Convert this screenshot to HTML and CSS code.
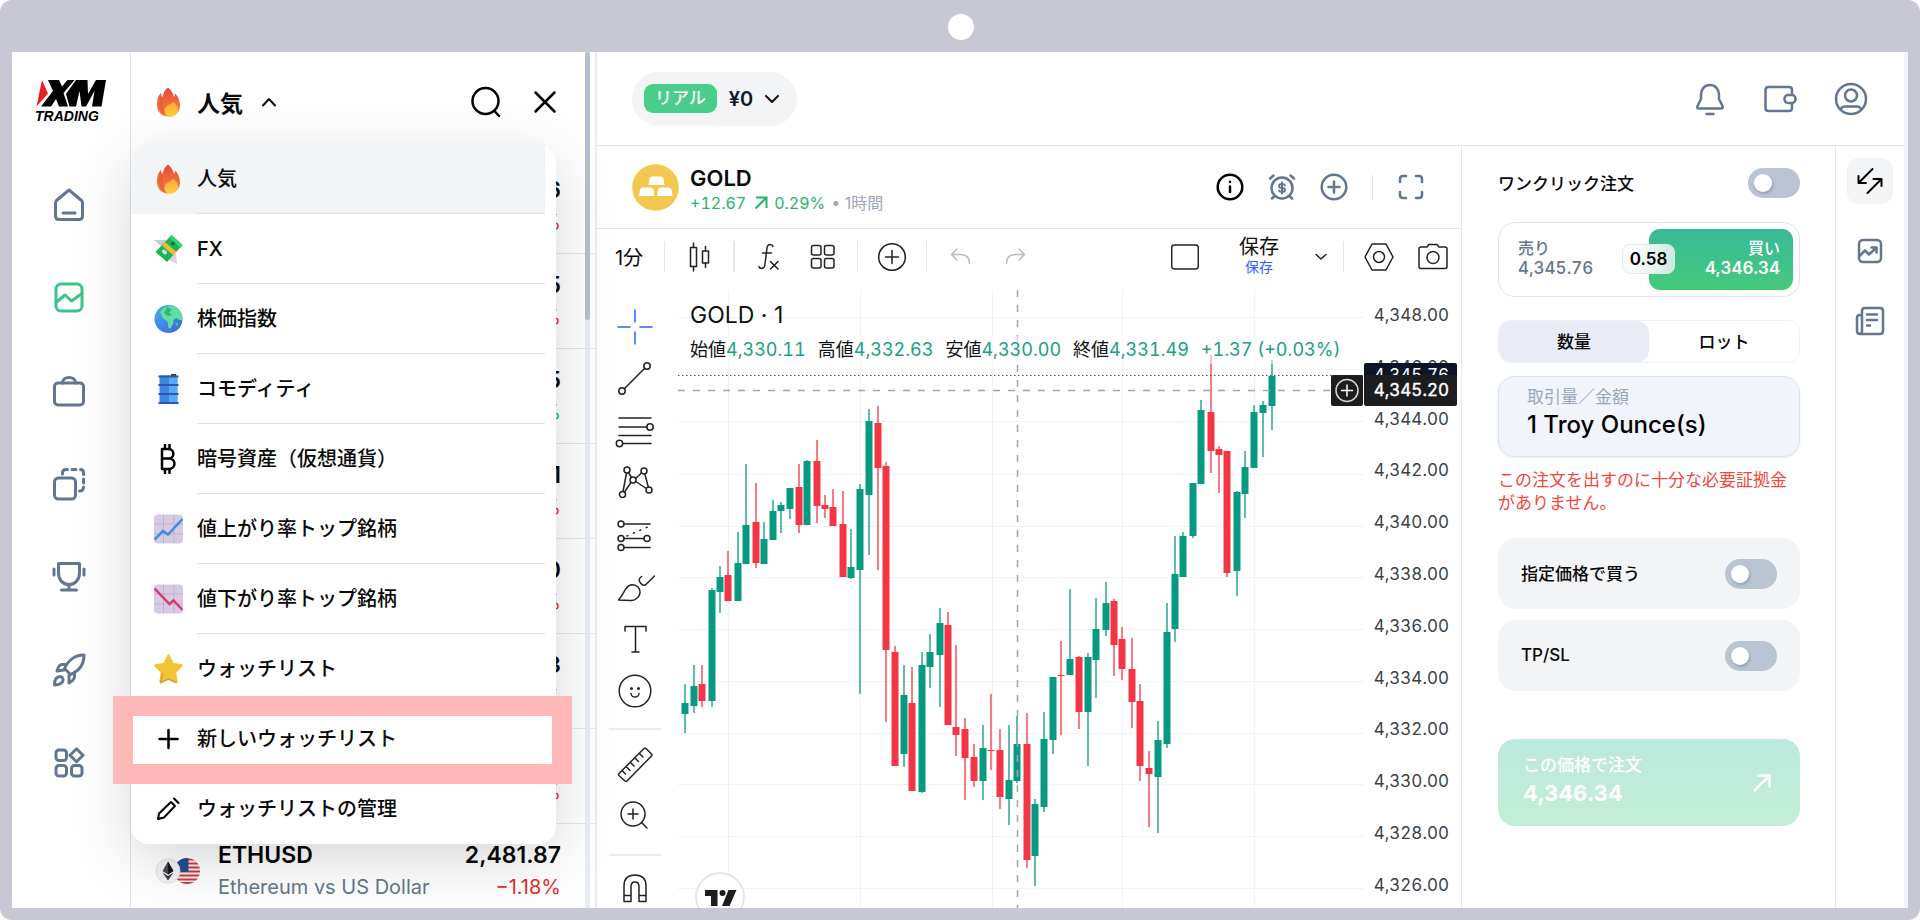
FILE: index.html
```html
<!DOCTYPE html>
<html lang="ja">
<head>
  <meta charset="UTF-8">
  <title>XM Trading</title>
  <link rel="stylesheet" href="styles.css">
</head>
<body>
<div class="device">
  <span class="camera"></span>

  <div class="app">
    <!-- Left navigation -->
    <nav class="side-nav">
      <a class="logo" href="#" aria-label="XM Trading">
        <svg width="72" height="27" viewBox="0 0 72 27">
          <path d="M7 0 L13 13.500 L1.500 26.500 Z" fill="#ee1c25"/>
          <path d="M13 0 H24 L27 6.500 L32.500 0 H39.500 L28.500 13 L33 26.500 H24 L21 19 L16 26.500 H6 L18 11 Z" fill="#000"/>
          <path d="M41 0 H52.500 L53 14 L61 0 H71 L66.500 26.500 H57 L59.500 11 L51 26.500 H46.500 L44.500 11 L41 26.500 H34.500 L31 14 Z" fill="#000"/>
        </svg>
        <span>TRADING</span>
      </a>
      <a class="nav-item" href="#" aria-label="Home">
        <svg class="icon" width="32" height="34" viewBox="0 0 32 34"><path d="M16 2 L28.500 12.500 Q29.500 13.500 29.500 15 V28 Q29.500 31.500 26 31.500 H6 Q2.500 31.500 2.500 28 V15 Q2.500 13.500 3.500 12.500 Z"/><path d="M10 25 H22"/></svg>
      </a>
      <a class="nav-item active" href="#" aria-label="Markets">
        <svg class="icon" width="32" height="32" viewBox="0 0 32 32"><rect x="3" y="2" width="26" height="27" rx="5"/><path d="M3 20.500 L12 13 L18.500 19 L29 11.500"/></svg>
      </a>
      <a class="nav-item" href="#" aria-label="Portfolio">
        <svg class="icon" width="34" height="34" viewBox="0 0 34 34"><rect x="2.500" y="9" width="29" height="22" rx="3.500"/><path d="M10.500 9 C10.500 1.500 23.500 1.500 23.500 9"/></svg>
      </a>
      <a class="nav-item" href="#" aria-label="Copy trading">
        <svg class="icon" width="34" height="34" viewBox="0 0 34 34"><rect x="2.500" y="11" width="21" height="21" rx="4"/><path d="M10.500 7 V6 Q10.500 2.500 14 2.500 H15.500 M20 2.500 H24 M28.500 2.500 Q31.500 2.500 31.500 6 V7.500 M31.500 12 V16 M31.500 20 Q31.500 24 27.500 24"/></svg>
      </a>
      <a class="nav-item" href="#" aria-label="Competitions">
        <svg class="icon" width="34" height="34" viewBox="0 0 34 34"><path d="M6.500 3.500 H27.500 V13 C27.500 20 23 24.500 17 24.500 C11 24.500 6.500 20 6.500 13 Z M17 24.500 V30 M9.500 30 H24.500 M2 9 V15 M32 9 V15"/></svg>
      </a>
      <a class="nav-item" href="#" aria-label="Discover">
        <svg class="icon" width="34" height="34" viewBox="0 0 34 34"><path d="M32 2 C22 2 15.500 8.500 12.500 15.500 L18.500 21.500 C26 18.500 32 12 32 2 Z"/><path d="M14.500 11.500 H9.500 Q7.500 12 6.500 14 L5 18 L12 17 M22.500 19 V23.500 Q22.500 26 20.500 27.500 L17 30 L17 22.500"/><path d="M8.500 23.500 C4 23.500 2.500 27 2.500 32 C7.500 32 11.500 30 11 26 Q10.500 24 8.500 23.500 Z"/></svg>
      </a>
      <a class="nav-item" href="#" aria-label="More">
        <svg class="icon" width="32" height="32" viewBox="0 0 32 32"><rect x="3" y="3" width="10.500" height="10.500" rx="3"/><rect x="3" y="18.500" width="10.500" height="10.500" rx="3"/><rect x="18.500" y="18.500" width="10.500" height="10.500" rx="3"/><path d="M23.500 1.800 L30 8.300 L23.500 14.800 L17 8.300 Z"/></svg>
      </a>
    </nav>

    <!-- Watchlist -->
    <aside class="watch">
      <div class="watch-head">
        <button class="watch-title">
          <svg width="29" height="30" viewBox="0 0 29 30"><use href="#fire"/></svg>
          <span>人気</span>
          <svg class="caret" width="14" height="10" viewBox="0 0 14 10"><path d="M1 8.500 L7 2 L13 8.500"/></svg>
        </button>
        <button class="plain" aria-label="Search"><svg class="icon-dark" width="30" height="32" viewBox="0 0 30 32"><circle cx="14.500" cy="15" r="13"/><path d="M23.500 25 L28 30"/></svg></button>
        <button class="plain" aria-label="Close"><svg class="icon-dark" width="24" height="24" viewBox="0 0 24 24"><path d="M2.500 2.500 L21.500 21.500 M21.500 2.500 L2.500 21.500"/></svg></button>
      </div>

      <div class="quotes">
        <div class="quote"><div class="quote-num"><b>6</b><span class="down">%</span></div></div>
        <div class="quote"><div class="quote-num"><b>5</b><span class="down">%</span></div></div>
        <div class="quote"><div class="quote-num"><b>5</b><span class="up">%</span></div></div>
        <div class="quote"><div class="quote-num"><b>1</b><span class="down">%</span></div></div>
        <div class="quote"><div class="quote-num"><b>0</b><span class="down">%</span></div></div>
        <div class="quote"><div class="quote-num"><b>3</b><span class="down">%</span></div></div>
        <div class="quote"><div class="quote-num"><b>&nbsp;</b><span class="down">%</span></div></div>
        <div class="quote">
          <svg class="pair" width="46" height="30" viewBox="0 0 46 30">
            <defs><clipPath id="flag"><circle cx="32" cy="15" r="13"/></clipPath></defs>
            <g clip-path="url(#flag)">
              <rect x="18" y="2" width="28" height="26" fill="#f4f4f4"/>
              <path d="M18 3.500 H46 M18 7.500 H46 M18 11.500 H46 M18 15.500 H46 M18 19.500 H46 M18 23.500 H46 M18 27 H46" stroke="#cf3a43" stroke-width="2"/>
              <rect x="18" y="2" width="15.500" height="14" fill="#1f4e94"/>
            </g>
            <circle cx="13" cy="15" r="12" fill="#f3f4f6" stroke="#dfe1e5"/>
            <path d="M13 5.500 L18.500 15 L13 18.500 L7.500 15 Z" fill="#4b4b4d"/><path d="M13 5.500 V18.500 L18.500 15 Z" fill="#18181a"/>
            <path d="M7.500 16.500 L13 20 L18.500 16.500 L13 24.500 Z" fill="#3b3b3d"/>
          </svg>
          <div class="quote-name"><b>ETHUSD</b><span>Ethereum vs US Dollar</span></div>
          <div class="quote-num"><b>2,481.87</b><span class="down">−1.18%</span></div>
        </div>
      </div>
      <div class="scroll-track"><div class="scroll-thumb"></div></div>

      <!-- Category menu -->
      <div class="menu">
        <button class="menu-item selected">
          <svg width="29" height="30" viewBox="0 0 29 30">
            <defs>
              <linearGradient id="fireOuter" x1="0" y1="0" x2="0" y2="1"><stop offset="0" stop-color="#e5493c"/><stop offset="1" stop-color="#f58a3c"/></linearGradient>
              <linearGradient id="fireInner" x1="0" y1="0" x2="0" y2="1"><stop offset="0" stop-color="#fba43a"/><stop offset="1" stop-color="#ffd23c"/></linearGradient>
              <linearGradient id="globe" x1="0" y1="0" x2="1" y2="1"><stop offset="0" stop-color="#3fb0f5"/><stop offset="1" stop-color="#4360d8"/></linearGradient>
              <g id="fire">
                <path d="M14 0.500 C17 3 19.500 7 20 10 C21 9 21 7.500 20.500 6 C24 9 26 14 26 18.500 C26 25 21 29.500 14.500 29.500 C8 29.500 3 25 3 18 C3 12.500 4.500 8 7 6 C7 8 7.500 9 8.500 10 C9.500 6 11 2.500 14 0.500 Z" fill="url(#fireOuter)"/>
                <path d="M5 20 C5 15 6 12 8 10.500 C9 17 9.500 24 13 28.500 C8.500 28 5 25 5 20 Z" fill="#d9553a" opacity=".5"/>
                <path d="M19 14.500 C22 17 25 20 24 24 C23 27.500 20 29.500 16.500 29.500 C12.500 29.500 10.500 27 10.500 24 C10.500 20 14 18.500 16 17 Q18 16 19 14.500 Z" fill="url(#fireInner)"/>
              </g>
            </defs>
            <use href="#fire"/>
          </svg>
          <span>人気</span>
        </button>
        <button class="menu-item">
          <svg width="29" height="30" viewBox="0 0 29 30">
            <path d="M0 6 H13 L10 15 Z" fill="#c9cdd1"/><path d="M16 20 L22 20 L23 30 L15 26 Z" fill="#d5d8db"/>
            <path d="M17.500 1 L28.500 11 L13 28 L1.500 18 Z" fill="#1db458"/><path d="M17.500 1 L28.500 11 L26.500 14 L15 3.500 Z" fill="#35d26d"/>
            <path d="M11 8 L22.500 18 L19.500 21.500 L8 11.500 Z" fill="#f5b63a"/>
            <ellipse cx="10.500" cy="18" rx="2" ry="2.800" fill="#b9f0c8" transform="rotate(-45 10.500 18)"/><circle cx="19" cy="9.500" r="2" fill="#0b7a3a"/>
          </svg>
          <span>FX</span>
        </button>
        <button class="menu-item">
          <svg width="29" height="30" viewBox="0 0 29 30">
            <circle cx="14.500" cy="15" r="14" fill="url(#globe)"/>
            <path d="M6 8 C9 3 16 0.800 21 2.800 C26 5 29 11 28.300 16 C26 17 24 14.500 22 14 L19.500 16 L19 20 L16.500 24.500 L14.500 24 L13.500 17.500 L9 14.500 Z" fill="#5fe0a0"/>
            <path d="M13 3 L18 5.500 L15 8.500 L18 11 L14 12 L10 9 Z" fill="#35b378"/><path d="M21 19 L24.500 18.500 L23 23 Z" fill="#48c47c"/>
          </svg>
          <span>株価指数</span>
        </button>
        <button class="menu-item">
          <svg width="29" height="30" viewBox="0 0 29 30">
            <rect x="5.500" y="1.500" width="18" height="28" fill="#3d84e0"/><rect x="15" y="2" width="8" height="27" fill="#56a9f5"/>
            <path d="M4.500 2.500 H24.500 M4.500 11 H24.500 M4.500 20 H24.500 M4.500 29 H24.500" stroke="#2956b4" stroke-width="2"/><rect x="17" y="0" width="5" height="2.500" fill="#444"/>
          </svg>
          <span>コモディティ</span>
        </button>
        <button class="menu-item">
          <svg class="icon-dark" width="29" height="30" viewBox="0 0 29 30"><path d="M8 5 V25 M8 5 H14.500 C21 5 21 14.500 14.500 14.500 H8 M14.500 14.500 C22.500 14.500 22.500 25 14.500 25 H8 M11 1 V5 M15.500 1 V5 M11 25 V29 M15.500 25 V29"/></svg>
          <span>暗号資産（仮想通貨）</span>
        </button>
        <button class="menu-item">
          <svg width="29" height="30" viewBox="0 0 29 30"><rect y="0.500" width="29" height="29" rx="4" fill="#d6cbe3"/><path d="M9.500 1 V29 M20 1 V29 M0 10 H29 M0 20 H29" stroke="#bdb1ce"/><path d="M0.500 25.500 L9 17 L14 20.500 L28.500 5" fill="none" stroke="#3f8fe0" stroke-width="2.500"/></svg>
          <span>値上がり率トップ銘柄</span>
        </button>
        <button class="menu-item">
          <svg width="29" height="30" viewBox="0 0 29 30"><rect y="0.500" width="29" height="29" rx="4" fill="#d6cbe3"/><path d="M9.500 1 V29 M20 1 V29 M0 10 H29 M0 20 H29" stroke="#bdb1ce"/><path d="M0.500 4.500 L15.500 20 L19.500 16.500 L28.500 26" fill="none" stroke="#e0356f" stroke-width="2.500"/></svg>
          <span>値下がり率トップ銘柄</span>
        </button>
        <button class="menu-item">
          <svg width="29" height="30" viewBox="0 0 29 30"><path d="M14.500 1.500 L18.500 10 L27.500 11.500 L21 18.500 L22.500 28 L14.500 24 L6.500 28 L8 18.500 L1.500 11.500 L10.500 10 Z" fill="#efc437" stroke="#efc437" stroke-width="2.500" stroke-linejoin="round"/><path d="M8.500 19 L7 28.500 L14.500 25 L22 28.500" fill="none" stroke="#d99b2b" stroke-width="1.500"/></svg>
          <span>ウォッチリスト</span>
        </button>
        <button class="menu-item">
          <svg class="icon-dark" width="29" height="30" viewBox="0 0 29 30"><path d="M14.500 6 V24 M5.500 15 H23.500"/></svg>
          <span>新しいウォッチリスト</span>
        </button>
        <button class="menu-item">
          <svg class="icon-dark thin" width="29" height="30" viewBox="0 0 29 30"><path d="M17 8 L21 12 L10 23.500 L4 25 L5 19.500 Z M20 4.500 L24.500 9"/></svg>
          <span>ウォッチリストの管理</span>
        </button>
        <i class="highlight"></i>
      </div>
    </aside>

    <!-- Trading area -->
    <main class="main">
      <header class="top-bar">
        <button class="account">
          <span class="badge">リアル</span><b>¥0</b>
          <svg class="caret" width="14" height="10" viewBox="0 0 14 10"><path d="M1 2 L7 8 L13 2"/></svg>
        </button>
        <div class="top-icons">
          <button class="plain" aria-label="Notifications"><svg class="icon" width="32" height="34" viewBox="0 0 32 34"><path d="M16 3 C10.500 3 7 7.500 7 12.500 V17 L3.500 24 Q2.500 26.500 5 26.500 H27 Q29.500 26.500 28.500 24 L25 17 V12.500 C25 7.500 21.500 3 16 3 Z M12.500 32 H19.500"/></svg></button>
          <button class="plain" aria-label="Wallet"><svg class="icon" width="34" height="32" viewBox="0 0 34 32"><path d="M29 11.500 V7 Q29 4 26 4 H5.500 Q2.500 4 2.500 7 V25 Q2.500 28 5.500 28 H26 Q29 28 29 25 V20.500"/><rect x="21.500" y="12" width="11" height="8" rx="3.500"/></svg></button>
          <button class="plain" aria-label="Profile"><svg class="icon" width="34" height="34" viewBox="0 0 34 34"><circle cx="17" cy="17" r="15"/><circle cx="17" cy="13.500" r="6"/><path d="M6.500 27.500 Q8 24.500 11 24.500 H23 Q26 24.500 27.500 27.500"/></svg></button>
        </div>
      </header>

      <div class="workspace">
        <section class="chart-col">
          <div class="symbol-bar">
            <svg width="47" height="47" viewBox="0 0 47 47"><circle cx="23.500" cy="23.500" r="23.300" fill="#f2c84e"/><path d="M20 12.500 H29 Q31 12.500 31.500 14.500 L32.500 21 H16.500 L17.500 14.500 Q18 12.500 20 12.500 Z M10.500 23.500 H19 Q21 23.500 21.500 25.500 L22.500 32 H7 L8 25.500 Q8.500 23.500 10.500 23.500 Z M28.500 23.500 H37 Q39 23.500 39.500 25.500 L40.500 32 H25 L26 25.500 Q26.500 23.500 28.500 23.500 Z" fill="#fff"/></svg>
            <div class="symbol-info">
              <h1>GOLD</h1>
              <p><span>+12.67</span><svg width="14" height="14" viewBox="0 0 14 14"><path d="M1.500 12.500 L12.500 1.500 M2 1.500 H12.500 V12"/></svg><span>0.29%</span><span class="period">• 1時間</span></p>
            </div>
            <div class="symbol-actions">
              <button class="plain" aria-label="Info"><svg class="icon-dark" width="28" height="28" viewBox="0 0 28 28"><circle cx="14" cy="14" r="12.300"/><path d="M14 13.500 V19 M14 8.800 V9"/></svg></button>
              <button class="plain" aria-label="Alert"><svg class="icon" width="28" height="28" viewBox="0 0 28 28"><circle cx="14" cy="15" r="10.500"/><path d="M6.500 23 L4 25.500 M21.500 23 L24 25.500 M2 5.500 L5.500 2.500 M26 5.500 L22.500 2.500"/><path class="fine" d="M17 12.500 Q16.500 11 14 11 Q11 11 11 13 Q11 15 14 15 Q17 15 17 17 Q17 19 14 19 Q11.500 19 11 17.500 M14 9.500 V20.500"/></svg></button>
              <button class="plain" aria-label="Add"><svg class="icon" width="28" height="28" viewBox="0 0 28 28"><circle cx="14" cy="14" r="12.300"/><path d="M14 8.500 V19.500 M8.500 14 H19.500"/></svg></button>
              <i class="sep"></i>
              <button class="plain" aria-label="Fullscreen"><svg class="icon" width="28" height="28" viewBox="0 0 28 28"><path d="M3 9 V6 Q3 3 6 3 H9 M19 3 H22 Q25 3 25 6 V9 M25 19 V22 Q25 25 22 25 H19 M9 25 H6 Q3 25 3 22 V19"/></svg></button>
            </div>
          </div>

          <div class="toolbar">
            <button class="tool-text">1分</button>
            <i class="sep"></i>
            <button class="tool" aria-label="Candles"><svg class="line" width="28" height="30" viewBox="0 0 28 30"><rect x="5.500" y="5.500" width="6" height="19"/><rect x="17.500" y="9" width="6" height="12"/><path d="M8.500 1 V5.500 M8.500 24.500 V29 M20.500 4.500 V9 M20.500 21 V25.500"/></svg></button>
            <i class="sep wide"></i>
            <button class="tool" aria-label="Indicators"><svg class="line" width="28" height="30" viewBox="0 0 28 30"><path d="M18 4.500 Q17.500 2.500 15.500 2.500 Q12.500 2.500 12 6 L10 22 Q9.500 26.500 6.500 26.500 Q4.500 26.500 4 24.500 M7.500 11 H16.500 M15.500 19.500 L23 27 M23 19.500 L15.500 27"/></svg></button>
            <button class="tool pair-next" aria-label="Layouts"><svg class="line" width="28" height="28" viewBox="0 0 28 28"><rect x="2.500" y="2.500" width="9.500" height="9.500" rx="2"/><rect x="15.500" y="2.500" width="9.500" height="9.500" rx="2"/><rect x="2.500" y="15.500" width="9.500" height="9.500" rx="2"/><rect x="15.500" y="15.500" width="9.500" height="9.500" rx="2"/></svg></button>
            <i class="sep"></i>
            <button class="tool" aria-label="Compare"><svg class="line" width="28" height="28" viewBox="0 0 28 28"><circle cx="14" cy="14" r="13.300"/><path d="M14 7.500 V20.500 M7.500 14 H20.500"/></svg></button>
            <i class="sep"></i>
            <button class="tool" aria-label="Undo"><svg class="line faded" width="28" height="28" viewBox="0 0 28 28"><path d="M10 6 L4.500 11.500 L10 17 M4.500 11.500 H14 Q22.500 12 22.500 20.500"/></svg></button>
            <button class="tool pair-next" aria-label="Redo"><svg class="line faded" width="28" height="28" viewBox="0 0 28 28"><path d="M18 6 L23.500 11.500 L18 17 M23.500 11.500 H14 Q5.500 12 5.500 20.500"/></svg></button>

            <button class="tool push" aria-label="Layout"><svg class="line" width="28" height="28" viewBox="0 0 28 28"><rect x="0.700" y="2" width="26.600" height="24" rx="2.500"/></svg></button>
            <button class="save"><span>保存</span><small>保存</small></button>
            <button class="plain" aria-label="Save menu"><svg class="line" width="12" height="8" viewBox="0 0 12 8"><path d="M1 1.500 L6 6 L11 1.500"/></svg></button>
            <i class="sep tight"></i>
            <button class="plain" aria-label="Settings"><svg class="line" width="30" height="28" viewBox="0 0 30 28"><path d="M8 1 H22 L29 14 L22 27 H8 L1 14 Z"/><circle cx="15" cy="14" r="5.500"/></svg></button>
            <button class="plain camera-btn" aria-label="Snapshot"><svg class="line" width="30" height="28" viewBox="0 0 30 28"><path d="M3 4 H9 L11 1.500 H19 L21 4 H27 Q29 4 29 6 V23.500 Q29 25.500 27 25.500 H3 Q1 25.500 1 23.500 V6 Q1 4 3 4 Z"/><circle cx="15" cy="14.500" r="6"/></svg></button>
          </div>

          <div class="chart-area">
            <div class="rail">
              <button class="rail-btn" aria-label="Cursor"><svg class="line blue" width="40" height="40" viewBox="0 0 40 40"><path d="M20 3 V15 M20 25 V37 M3 20 H15 M25 20 H37"/></svg></button>
              <button class="rail-btn" aria-label="Trend line"><svg class="line" width="40" height="40" viewBox="0 0 40 40"><circle cx="7" cy="32" r="3.200"/><circle cx="32" cy="7" r="3.200"/><path d="M9.300 29.700 L29.700 9.300"/></svg></button>
              <button class="rail-btn" aria-label="Fibonacci"><svg class="line" width="40" height="40" viewBox="0 0 40 40"><path d="M4 7 H36 M4 16 H32 M4 24.500 H36 M8 32.500 H36"/><circle cx="35" cy="16" r="3.200"/><circle cx="4.500" cy="32.500" r="3.200"/></svg></button>
              <button class="rail-btn" aria-label="Patterns"><svg class="line" width="40" height="40" viewBox="0 0 40 40"><circle cx="12" cy="7" r="3"/><circle cx="29" cy="8" r="3"/><circle cx="18" cy="17" r="3"/><circle cx="7.500" cy="31.500" r="3"/><circle cx="34" cy="27" r="3"/><path d="M11.500 10 L8 28.500 M13.500 9.500 L16.500 14.500 M16 19.500 L9.500 29 M20.500 15.500 L26.500 10 M20.800 18.500 L31.300 25.500 M29.800 11 L33.300 24"/></svg></button>
              <button class="rail-btn" aria-label="Forecast"><svg class="line" width="40" height="40" viewBox="0 0 40 40"><circle cx="6" cy="9" r="3"/><circle cx="6" cy="23.500" r="3"/><circle cx="32" cy="23.500" r="3"/><circle cx="6" cy="32.500" r="3"/><path d="M9 9 H35 M9 23.500 H29 M9 32.500 H35"/><path d="M12 21 L35 11" stroke-dasharray="1 6"/></svg></button>
              <button class="rail-btn" aria-label="Brush"><svg class="line" width="40" height="40" viewBox="0 0 40 40"><path d="M3.500 33 C8 28 9 24 11.500 21 C14.500 16.500 20 17 23 20 C26.500 24 25 29 21.500 31.500 Q19 33.500 16 33.500 Z M26.500 9.500 Q22.500 12.500 25.500 16 Q28.500 20 31.500 17 L39.500 9"/></svg></button>
              <button class="rail-btn" aria-label="Text"><svg class="line" width="40" height="40" viewBox="0 0 40 40"><path d="M10 12 V7.500 H31 V12 M20.500 7.500 V33 M17 33 H24"/></svg></button>
              <button class="rail-btn" aria-label="Emoji"><svg class="line" width="40" height="40" viewBox="0 0 40 40"><circle cx="20" cy="20" r="15.800"/><path d="M16 22.500 Q16.500 26 20 26 Q23.500 26 24 22.500"/><path class="dot" d="M16.500 17.500 V17.600 M23.500 17.500 V17.600"/></svg></button>
              <i class="rail-sep"></i>
              <button class="rail-btn" aria-label="Measure"><svg class="line" width="40" height="40" viewBox="0 0 40 40"><path d="M29 3.500 Q30 2.500 31 3.500 L36.500 9 Q37.500 10 36.500 11 L12 36 Q11 37 10 36 L4 30.500 Q3 29.500 4 28.500 Z M24.500 8.500 L28 12 M20 13 L23.500 16.500 M15.500 17.500 L19 21 M11.500 22 L15 25.500 M7.500 26 L10.500 29"/></svg></button>
              <button class="rail-btn" aria-label="Zoom in"><svg class="line" width="40" height="40" viewBox="0 0 40 40"><circle cx="18" cy="17" r="12"/><path d="M18 12 V22 M13 17 H23 M26.500 25.500 L32 31"/></svg></button>
              <i class="rail-sep"></i>
              <button class="rail-btn" aria-label="Magnet"><svg class="line" width="40" height="40" viewBox="0 0 40 40"><path d="M9 30.500 V15 Q9 4 20 4 Q31 4 31 15 V30.500 H24 V15.500 Q24 11 20 11 Q16 11 16 15.500 V30.500 Z M9 24.500 H16 M24 24.500 H31"/></svg></button>
            </div>

            <div class="canvas">
              <svg id="chart" class="chart"></svg>
              <div class="legend">
                <p class="legend-title">GOLD · 1</p>
                <p class="legend-row">
                  <span>始値<em>4,330.11</em></span><span>高値<em>4,332.63</em></span><span>安値<em>4,330.00</em></span><span>終値<em>4,331.49</em></span><em>+1.37 (+0.03%)</em>
                </p>
              </div>
              <svg class="tv" width="50" height="50" viewBox="0 0 50 50"><circle cx="25" cy="25" r="24" fill="#fff" stroke="#e6e6e8" stroke-width="2"/><path d="M10 18 H22.500 V34 H16 V24 H10 Z M33.500 18 H41.500 L34.500 34 H27 Z" fill="#1c1d1f"/><circle cx="27.500" cy="21" r="3" fill="#1c1d1f"/></svg>
            </div>
          </div>
        </section>

        <!-- Order form -->
        <form class="order">
          <div class="row">
            <label for="oneclick">ワンクリック注文</label>
            <input type="checkbox" class="toggle" id="oneclick">
          </div>
          <div class="bid-ask">
            <button type="button" class="sell"><span>売り</span><b>4,345.76</b></button>
            <button type="button" class="buy"><span>買い</span><b>4,346.34</b></button>
            <span class="spread">0.58</span>
          </div>
          <div class="tabs">
            <button type="button" class="tab active">数量</button>
            <button type="button" class="tab">ロット</button>
          </div>
          <div class="field">
            <label for="amount">取引量／金額</label>
            <input type="text" id="amount" value="1 Troy Ounce(s)">
          </div>
          <p class="error">この注文を出すのに十分な必要証拠金がありません。</p>
          <div class="card">
            <label for="limit">指定価格で買う</label>
            <input type="checkbox" class="toggle" id="limit">
          </div>
          <div class="card">
            <label for="tpsl">TP/SL</label>
            <input type="checkbox" class="toggle" id="tpsl">
          </div>
          <button type="button" class="submit">
            <span><small>この価格で注文</small><b>4,346.34</b></span>
            <svg width="20" height="20" viewBox="0 0 20 20"><path d="M2 18 L17.500 2.500 M5 2.500 H17.500 V14.500"/></svg>
          </button>
        </form>

        <div class="strip">
          <button class="strip-btn active" aria-label="Trade"><svg class="icon-dark thin" width="28" height="28" viewBox="0 0 28 28"><path d="M16.500 2 L2.500 16 M2.500 9 V16 H10 M11.500 26 L25.500 12 M17.500 12 H25.500 V19"/></svg></button>
          <button class="strip-btn" aria-label="Analysis"><svg class="icon" width="28" height="28" viewBox="0 0 28 28"><rect x="3" y="3" width="22" height="22" rx="4"/><path d="M4 18.500 L9 13.500 L13 17.500 L20 11 M15.500 10.500 H20.500 V15.500"/></svg></button>
          <button class="strip-btn" aria-label="News"><svg class="icon" width="30" height="30" viewBox="0 0 30 30"><path d="M7 9 H5 Q2 9 2 12 V25 Q2 28 5 28 H25 Q28 28 28 25 V5 Q28 2 25 2 H10 Q7 2 7 5 V25 Q7 28 4.500 28 M12 8.500 H22 M12 14 H22 M12 19.500 H15"/></svg></button>
        </div>
      </div>
    </main>
  </div>
</div>
<script src="chart.js"></script>
</body>
</html>
```
FILE: styles.css
```css
* {
  box-sizing: border-box;
}

body {
  margin: 0;
  background: #fff;
  color: #0a0a0a;
  font-family: Inter, "Noto Sans CJK JP", sans-serif;
  font-size: 17px;
}

button {
  font: inherit;
  color: inherit;
  background: none;
  border: none;
  padding: 0;
  cursor: pointer;
}

h1, p {
  margin: 0;
}

svg {
  display: block;
  flex: none;
}

/* Device frame */
.device {
  position: relative;
  height: 100vh;
  padding: 52px 12px 12px;
  background: #c8c7d4;
  border-radius: 12px;
}

.camera {
  position: absolute;
  top: 14px;
  left: 50%;
  width: 26px;
  height: 26px;
  margin-left: -12px;
  border-radius: 50%;
  background: #fff;
}

.app {
  display: grid;
  grid-template-columns: 119px 464px minmax(0, 1fr);
  grid-template-rows: minmax(0, 1fr);
  height: 100%;
  overflow: hidden;
  background: #fff;
}

/* Icons */
.icon, .icon-dark, .line, .caret {
  fill: none;
  stroke: #64768f;
  stroke-width: 2.500;
  stroke-linecap: round;
  stroke-linejoin: round;
}

.side-nav .icon {
  stroke-width: 3;
}

.icon-dark {
  stroke: #000;
}

.icon-dark.thin, .icon .fine {
  stroke-width: 2;
}

.caret {
  stroke: #111;
  stroke-width: 2;
}

.line {
  stroke: #222;
  stroke-width: 1.500;
}

.line.faded {
  stroke: #b8babf;
}

.line.blue {
  stroke: #2962ff;
}

.line .dot {
  stroke-width: 3;
}

/* Left navigation */
.side-nav {
  display: flex;
  flex-direction: column;
  border-right: 1px solid #dfe5ec;
}

.logo {
  height: 106px;
  padding: 28px 0 0 23px;
  color: #000;
  font-family: "Liberation Sans", sans-serif;
  font-size: 14px;
  font-style: italic;
  font-weight: bold;
  line-height: 18px;
  text-decoration: none;
}

.nav-item {
  display: flex;
  align-items: center;
  justify-content: center;
  height: 93px;
  padding-right: 4px;
}

.nav-item.active .icon {
  stroke: #3dc28a;
}

/* Watchlist */
.watch {
  position: relative;
  min-width: 0;
}

.watch-head {
  display: flex;
  align-items: center;
  gap: 32px;
  height: 107px;
  padding: 0 38px 8px 23px;
}

.watch-title {
  display: flex;
  align-items: center;
  gap: 14px;
  margin-right: auto;
  font-size: 23px;
  font-weight: 700;
}

.watch-title .caret {
  margin-left: 5px;
}

.quote {
  display: flex;
  align-items: center;
  height: 95px;
  padding: 0 34px 0 24px;
  border-bottom: 1px solid #e2e8ef;
}

.quote b {
  display: block;
  font-size: 23px;
  font-weight: 600;
  line-height: 32px;
}

.quote span {
  display: block;
  font-size: 20px;
  line-height: 32px;
}

.quote-name {
  margin-left: 17px;
  color: #000;
}

.quote-name span {
  color: #65778f;
}

.quote-num {
  margin-left: auto;
  text-align: right;
}

.down {
  color: #e0302c;
}

.up {
  color: #1fb46a;
}

.scroll-track {
  position: absolute;
  top: 0;
  bottom: 0;
  right: 5px;
  width: 5px;
  background: #e8ecf3;
}

.scroll-thumb {
  height: 268px;
  border-radius: 3px;
  background: #b4c0cf;
}

/* Category menu */
.menu {
  position: absolute;
  top: 92px;
  left: 0;
  right: 39px;
  z-index: 2;
  border-radius: 18px;
  background: #fff;
  box-shadow: 0 16px 60px rgba(0, 0, 0, 0.16);
}

.menu-item {
  position: relative;
  display: flex;
  align-items: center;
  gap: 14px;
  width: calc(100% - 11px);
  height: 70px;
  padding-left: 23px;
  font-size: 20px;
  font-weight: 500;
  text-align: left;
}

.menu-item span {
  flex: 1;
  line-height: 68px;
  border-bottom: 1px solid #dbe3ea;
}

.menu-item.selected {
  border-radius: 18px 2px 0 0;
  background: #f2f4f6;
}

.menu-item:nth-child(n+8) span {
  border-bottom-color: transparent;
}

.highlight {
  position: absolute;
  left: -18px;
  right: -16px;
  top: 552px;
  height: 88px;
  border: 20px solid #feb8b8;
}

/* Main */
.main {
  display: flex;
  flex-direction: column;
  min-width: 0;
  min-height: 0;
  border-left: 2px solid #e8edf5;
  border-right: 4px solid #f1f4f9;
}

.top-bar {
  display: flex;
  flex: none;
  align-items: center;
  justify-content: space-between;
  height: 94px;
  padding: 0 36px 0 35px;
  border-bottom: 1px solid #e2e7ed;
}

.account {
  display: flex;
  align-items: center;
  gap: 12px;
  height: 54px;
  padding: 0 18px 0 12px;
  border-radius: 27px;
  background: #f2f4f6;
  color: #10182b;
}

.account b {
  font-size: 20px;
  font-weight: 600;
}

.badge {
  padding: 0 11px;
  border-radius: 9px;
  background: #48cd8a;
  color: #fff;
  font-weight: 500;
  line-height: 29px;
}

.top-icons {
  display: flex;
  align-items: center;
  gap: 37px;
}

.workspace {
  display: grid;
  grid-template-columns: minmax(0, 1fr) 374px 69px;
  grid-template-rows: minmax(0, 1fr);
  flex: 1;
  min-height: 0;
}

.chart-col {
  display: flex;
  flex-direction: column;
  min-height: 0;
}

.symbol-bar {
  display: flex;
  flex: none;
  align-items: center;
  height: 83px;
  padding: 0 36px 0 35px;
  border-bottom: 1px solid #e2e8ee;
}

.symbol-info {
  margin-left: 11px;
  padding-top: 6px;
}

.symbol-info h1 {
  font-size: 22px;
  font-weight: 600;
  line-height: 26px;
}

.symbol-info p {
  display: flex;
  align-items: center;
  gap: 6px;
  color: #1fb46a;
  font-size: 16px;
  font-variant-numeric: tabular-nums;
  line-height: 24px;
}

.symbol-info svg {
  margin-left: 2px;
  fill: none;
  stroke: #1fb46a;
  stroke-width: 2;
}

.period {
  color: #9aa7bd;
  font-variant-numeric: normal;
}

.symbol-actions {
  display: flex;
  align-items: center;
  gap: 24px;
  margin-left: auto;
}

.sep {
  width: 1px;
  height: 31px;
  background: #e4e6ea;
}

.sep.wide {
  width: 2px;
}

.symbol-actions .sep {
  height: 25px;
  background: #dfe5ec;
}

/* Chart toolbar */
.toolbar {
  display: flex;
  flex: none;
  align-items: center;
  gap: 20px;
  height: 61px;
  padding: 0 13px 6px 17px;
}

.tool-text {
  width: 30px;
  font-size: 20px;
  white-space: nowrap;
}

.tool {
  width: 28px;
}

.pair-next {
  margin-left: 6px;
}

.push {
  margin-left: auto;
}

.save {
  margin: 0 16px 0 20px;
  color: #111;
}

.save span, .save small {
  display: block;
  font-size: 20px;
  line-height: 20px;
}

.save small {
  color: #2962ff;
  font-size: 14px;
}

.sep.tight {
  margin: 0 0 0 -4px;
}

.camera-btn {
  margin-left: 4px;
}

.chart-area {
  display: flex;
  flex: 1;
  min-height: 0;
}

.rail {
  width: 81px;
  padding: 11px 5px 0 0;
  overflow: hidden;
}

.rail-btn {
  display: flex;
  align-items: center;
  justify-content: center;
  width: 100%;
  height: 52px;
}

.rail-sep {
  display: block;
  height: 2px;
  margin: 11px 12px 9px;
  background: #ebecee;
}

.canvas {
  position: relative;
  flex: 1;
  overflow: hidden;
}

.chart {
  width: 100%;
  height: 100%;
  font-size: 17px;
  font-variant-numeric: tabular-nums;
}

.legend {
  position: absolute;
  top: 10px;
  left: 12px;
  white-space: nowrap;
  color: #111;
}

.legend-title {
  font-size: 23px;
  line-height: 30px;
}

.legend-row {
  display: flex;
  gap: 12px;
  margin-top: 6px;
  font-size: 18px;
  line-height: 28px;
  background: rgba(255, 255, 255, 0.5);
}

.legend em {
  color: #17a085;
  font-style: normal;
  font-variant-numeric: tabular-nums;
}

.tv {
  position: absolute;
  left: 17px;
  bottom: -14px;
}

/* Order form */
.order {
  padding: 22px 35px 0 36px;
  border-left: 1px solid #e2e8ee;
  font-weight: 500;
}

.row, .card {
  display: flex;
  align-items: center;
  justify-content: space-between;
}

.toggle {
  appearance: none;
  width: 52px;
  height: 30px;
  margin: 0;
  padding: 6px;
  border-radius: 15px;
  background: #bac4d2;
  cursor: pointer;
}

.toggle::before {
  content: "";
  display: block;
  width: 18px;
  height: 18px;
  border-radius: 50%;
  background: #fff;
  box-shadow: 1px 2px 3px rgba(40, 60, 90, 0.25);
}

.bid-ask {
  position: relative;
  display: flex;
  height: 75px;
  margin-top: 24px;
  padding: 6px;
  border: 1px solid #dfe5ed;
  border-radius: 17px;
}

.bid-ask button {
  flex: 1;
  padding: 0 13px 4px;
  line-height: 20px;
}

.bid-ask span, .bid-ask b {
  display: block;
  font-size: 16px;
  font-weight: 500;
}

.bid-ask b {
  font-size: 17px;
  font-variant-numeric: tabular-nums;
}

.sell {
  color: #64768f;
  text-align: left;
}

.buy {
  border-radius: 11px;
  background: linear-gradient(#38b998, #46ca7a);
  color: #fff;
  text-align: right;
}

.bid-ask .buy b {
  font-weight: 600;
}

.bid-ask .spread {
  position: absolute;
  left: 50%;
  top: 21px;
  width: 53px;
  height: 30px;
  margin-left: -27px;
  border: 1px solid #e4e9ec;
  border-radius: 8px;
  background: linear-gradient(90deg, #fafbfc 30%, #cdeadf);
  color: #000;
  font-size: 17px;
  font-weight: 600;
  line-height: 28px;
  text-align: center;
}

.tabs {
  display: flex;
  height: 43px;
  margin-top: 23px;
  border: 1px solid #eef1f4;
  border-radius: 12px;
}

.tab {
  flex: 1;
  padding-bottom: 3px;
  border-radius: 12px;
}

.tab.active {
  background: #e9ecf5;
}

.field {
  height: 81px;
  margin-top: 13px;
  padding: 8px 28px;
  border: 1px solid #dbe4ee;
  border-radius: 17px;
  background: #f1f4fa;
  box-shadow: 0 1px 3px rgba(100, 120, 150, 0.15);
}

.field label {
  display: block;
  color: #9aa7bb;
  font-weight: 400;
  line-height: 24px;
}

.field input {
  display: block;
  width: 100%;
  height: 30px;
  padding: 0;
  border: none;
  background: none;
  color: #000;
  font: inherit;
  font-size: 24px;
  outline: none;
}

.error {
  margin-top: 12px;
  color: #f2473b;
  font-weight: 400;
  line-height: 23px;
}

.card {
  height: 71px;
  margin-top: 11px;
  padding: 0 23px;
  border-radius: 18px;
  background: #f2f4f6;
}

.row label, .card label {
  padding-bottom: 2px;
}

.error + .card {
  margin-top: 23px;
}

.submit {
  display: flex;
  align-items: center;
  justify-content: space-between;
  width: 100%;
  height: 87px;
  margin-top: 48px;
  padding: 0 28px 0 25px;
  border-radius: 17px;
  background: linear-gradient(#bce9df, #c3eed6);
  color: #fff;
  text-align: left;
}

.submit span {
  padding-bottom: 8px;
}

.submit small, .submit b {
  display: block;
  font-size: 17px;
  line-height: 28px;
}

.submit b {
  font-size: 22px;
  font-weight: 700;
}

.submit svg {
  fill: none;
  stroke: #fff;
  stroke-width: 2.500;
}

/* Right strip */
.strip {
  display: flex;
  flex-direction: column;
  align-items: center;
  gap: 24px;
  padding-top: 12px;
  border-left: 1px solid #e2e8ee;
}

.strip-btn {
  display: flex;
  align-items: center;
  justify-content: center;
  width: 46px;
  height: 46px;
  border-radius: 12px;
}

.strip-btn.active {
  background: #f2f4f6;
}
```
FILE: chart.js
```js
// [x, high, body top, body bottom, low, up]
const candles = [
  [7,394,413,424,443,1],[16,375,396,416,423,1],[24,375,394,411,417,0],[34,298,300,411,417,1],
  [42,276,287,302,323,1],[50,261,285,311,311,0],[60,242,273,311,311,1],[68,174,235,274,274,1],
  [78,193,232,273,278,0],[86,232,249,274,274,1],[95,210,221,250,250,1],[103,212,215,221,243,1],
  [112,198,198,219,229,1],[121,174,197,235,243,0],[129,170,171,235,235,1],[139,150,171,216,233,0],
  [147,205,215,219,228,0],[155,199,217,236,236,0],[165,201,234,287,287,0],[173,239,277,288,289,1],
  [182,194,199,280,404,1],[191,119,131,205,265,1],[200,116,133,178,280,0],[208,172,176,360,432,0],
  [217,356,362,476,476,0],[226,375,405,464,477,1],[234,377,413,501,501,0],[244,362,375,502,503,1],
  [252,344,362,377,398,1],[262,318,333,365,417,1],[270,322,335,435,435,0],[278,355,437,445,466,0],
  [287,428,439,468,510,0],[296,454,467,491,497,0],[305,435,458,491,510,1],[313,404,460,461,480,0],
  [322,439,460,507,519,0],[331,435,490,509,535,1],[339,426,454,491,493,1],[349,423,454,570,578,0],
  [357,509,514,566,596,1],[366,422,449,517,522,1],[375,387,387,450,464,1],[383,351,385,386,445,0],
  [392,299,369,385,385,1],[401,366,367,422,439,0],[410,363,367,422,476,1],[418,308,339,370,408,1],
  [428,292,313,340,346,1],[436,309,311,355,386,0],[444,337,349,379,390,0],[454,348,379,412,438,0],
  [462,394,411,476,491,0],[471,461,478,484,537,0],[480,431,450,487,543,1],[489,313,342,454,458,1],
  [497,246,284,339,352,1],[505,242,246,287,287,1],[515,193,193,246,248,1],[523,110,120,194,194,1],
  [533,65,122,161,183,0],[541,156,159,165,203,0],[549,161,161,283,287,0],[559,201,202,281,306,1],
  [567,161,177,204,228,1],[576,115,122,178,178,1],[585,111,115,123,167,1],[594,70,86,116,140,1]
];

const plotWidth = 685;
const svg = document.getElementById("chart");
let out = "";

// Grid
[50, 182, 314, 444, 576].forEach(x => {
  out += `<path d="M${x}.5 0 V618" stroke="#f1f2f4"/>`;
});
[27, 79, 131, 184, 236, 287, 339, 391, 443, 494, 546, 598].forEach((y, i) => {
  const price = 4348 - i * 2;
  const labelY = Math.round(31 + i * 51.8);
  out += `<path d="M0 ${y}.5 H${plotWidth}" stroke="#f1f2f4"/>`;
  out += `<text x="771" y="${labelY}" text-anchor="end" fill="#3c3f45">${price.toLocaleString("en-US")}.00</text>`;
});

// Candles
candles.forEach(([x, high, top, bottom, low, up]) => {
  const color = up ? "#089981" : "#f23645";
  out += `<path d="M${x} ${high} V${low}" stroke="${color}" stroke-width="1.300"/>`;
  out += `<rect x="${x - 3.5}" y="${top}" width="7" height="${Math.max(bottom - top, 1)}" fill="${color}"/>`;
});

// Last price and crosshair
out += `<path d="M0 85.5 H${plotWidth}" stroke="#555" stroke-dasharray="1.500 2.500"/>`;
out += `<path d="M0 100.500 H653" stroke="#a3a5aa" stroke-width="1.500" stroke-dasharray="7 8"/>`;
out += `<path d="M339.500 0 V618" stroke="#a3a5aa" stroke-width="1.500" stroke-dasharray="7 8"/>`;

out += `<rect x="686" y="73" width="93" height="30" rx="2" fill="#0c1426"/>`;
out += `<text x="771" y="91" text-anchor="end" fill="#fff">4,345.76</text>`;
out += `<rect x="686" y="85" width="93" height="31" rx="2" fill="#1c1d1f"/>`;
out += `<text x="771" y="106" text-anchor="end" fill="#fff" stroke="#fff" stroke-width=".4">4,345.20</text>`;
out += `<rect x="653" y="85" width="32" height="31" rx="2" fill="#1c1d1f"/>`;
out += `<circle cx="669" cy="100.500" r="11" fill="none" stroke="#d6d6d8" stroke-width="1.500"/>`;
out += `<path d="M669 94.500 V106.500 M663 100.500 H675" stroke="#fff" stroke-width="1.500"/>`;

svg.innerHTML = out;
```
